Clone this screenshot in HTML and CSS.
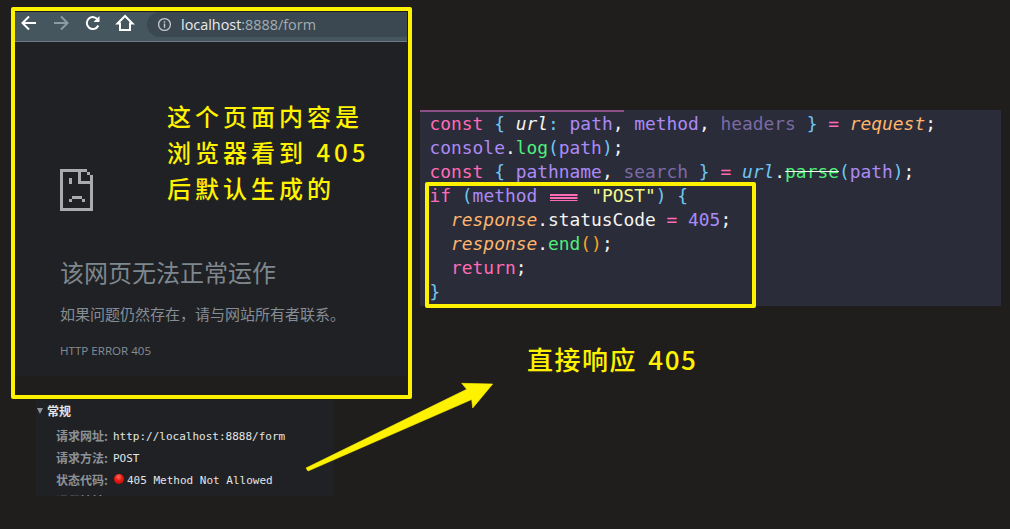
FILE: index.html
```html
<!DOCTYPE html>
<html lang="zh-CN">
<head>
<meta charset="utf-8">
<title>405</title>
<link rel="stylesheet" href="styles.css">
</head>
<body>
<main class="canvas">
  <section class="browser">
    <header class="toolbar">
      <nav class="nav-icons">
        <svg class="icon" viewBox="0 0 20 20"><path d="M17 10H4M10 3.500 3.500 10l6.500 6.500" fill="none" stroke="#fff" stroke-width="2"/></svg>
        <svg class="icon" viewBox="0 0 20 20"><path d="M3 10h13M10 3.500l6.500 6.500-6.500 6.500" fill="none" stroke="#8f9ba3" stroke-width="2"/></svg>
        <svg class="icon" viewBox="0 0 20 20"><path d="M15.300 12.500a6 6 0 1 1-.2-5.300" fill="none" stroke="#fff" stroke-width="2"/><path d="M16.500 3v6h-6z" fill="#fff"/></svg>
        <svg class="icon" viewBox="0 0 20 20"><path d="M10 3 2.500 10.500H5V17h10v-6.500h2.500z" fill="none" stroke="#fff" stroke-width="2"/></svg>
      </nav>
      <div class="omnibox">
        <svg class="info" viewBox="0 0 16 16"><circle cx="8" cy="8" r="6.300" fill="none" stroke="#c4cacd" stroke-width="1.400"/><path d="M8 7v4.500M8 4.500v1.500" stroke="#c4cacd" stroke-width="1.500"/></svg>
        <span class="host">localhost</span><span class="path">:8888/form</span>
      </div>
    </header>
    <div class="error-page">
      <svg class="sad" viewBox="0 0 33 42" shape-rendering="crispEdges"><path fill="#a9abad" fill-rule="evenodd" d="M0 0H27V3H30V6H33V42H0ZM3 3H18V15H30V39H3ZM21 3H27V6H30V12H21Z"/><path fill="#a9abad" d="M9 9h3v6H9zM12 27H22V30H25V33H22V30H12V33H9V30H12Z"/></svg>
      <h1 class="err-title">该网页无法正常运作</h1>
      <p class="err-text">如果问题仍然存在，请与网站所有者联系。</p>
      <p class="err-code">HTTP ERROR 405</p>
    </div>
  </section>

  <section class="devtools">
    <h2 class="dev-head"><span class="caret"></span>常规</h2>
    <dl class="dev-rows">
      <div class="dev-row"><dt>请求网址:</dt><dd>http://localhost:8888/form</dd></div>
      <div class="dev-row"><dt>请求方法:</dt><dd>POST</dd></div>
      <div class="dev-row"><dt>状态代码:</dt><dd><span class="dot"></span>405 Method Not Allowed</dd></div>
      <div class="dev-row dev-row-cut"><dt>远程地址:</dt><dd></dd></div>
    </dl>
  </section>

  <section class="code">
<pre class="code-text"><span class="kw">const</span> <span class="br">{</span> <i class="wh">url</i><span class="br">:</span> <span class="vr">path</span><span class="wh">,</span> <span class="vr">method</span><span class="wh">,</span> <span class="dim">headers</span> <span class="br">}</span> <span class="kw">=</span> <i class="or">request</i><span class="wh">;</span>
<span class="vr">console</span><span class="wh">.</span><span class="gr">log</span><span class="br">(</span><span class="vr">path</span><span class="br">)</span><span class="wh">;</span>
<span class="kw">const</span> <span class="br">{</span> <span class="vr">pathname</span><span class="wh">,</span> <span class="dim">search</span> <span class="br">}</span> <span class="kw">=</span> <i class="br">url</i><span class="wh">.</span><span class="gr strike">parse</span><span class="br">(</span><span class="vr">path</span><span class="br">)</span><span class="wh">;</span>
<span class="kw">if</span> <span class="br">(</span><span class="vr">method</span> <span class="triple">===</span> <span class="st">"POST"</span><span class="br">)</span> <span class="br">{</span>
  <i class="or">response</i><span class="wh">.statusCode</span> <span class="kw">=</span> <span class="vr">405</span><span class="wh">;</span>
  <i class="or">response</i><span class="wh">.</span><span class="gr">end</span><span class="am">()</span><span class="wh">;</span>
  <span class="kw">return</span><span class="wh">;</span>
<span class="br">}</span></pre>
  </section>

  <div class="mark mark-browser"></div>
  <div class="mark mark-code"></div>

  <p class="note note-browser">这个页面内容是<br>浏览器看到 405<br>后默认生成的</p>
  <p class="note note-code">直接响应 405</p>

  <svg class="arrow" viewBox="0 0 1010 529"><path d="M306 468 466.700 389.300 461.700 383.300 492.700 384 472.700 408 471.700 399.500 308 471Z" fill="#fff200" stroke="#fff200" stroke-width=".6" stroke-linejoin="round"/></svg>
</main>
</body>
</html>
```

FILE: styles.css
```css
* { box-sizing: border-box; }
html, body { margin: 0; height: 100%; background: #1f1e1c; overflow: hidden; }
.canvas { position: relative; width: 1010px; height: 529px; font-family: "Noto Sans CJK SC", sans-serif; }

.browser { position: absolute; left: 15px; top: 12px; width: 392px; height: 364px; background: #202124; display: flex; flex-direction: column; }
.toolbar { height: 30px; flex: none; display: flex; align-items: flex-start; background: #46565f; border-bottom: 1px solid #6b7a83; }
.nav-icons { width: 132px; flex: none; display: flex; align-items: center; gap: 12px; padding: 1px 0 0 4px; }
.icon { width: 20px; height: 20px; display: block; }
.omnibox { flex: 1; height: 25px; background: #3b4851; border-radius: 13px 0 0 13px; display: flex; align-items: center; padding-left: 10px; font: 14.400px/23px "Open Sans", "Noto Sans", sans-serif; }
.info { width: 15px; height: 15px; margin-right: 9px; flex: none; }
.host { color: #e8eaed; }
.path { color: #a3adb3; }
.error-page { padding: 127px 0 0 45px; }
.sad { display: block; width: 33px; height: 42px; }
.err-title { margin: 43px 0 0; font: 400 24px/36px "Noto Sans CJK SC", sans-serif; color: #7f878e; }
.err-text { margin: 14px 0 0; font: 15px/20px "Noto Sans CJK SC", sans-serif; color: #858d94; white-space: nowrap; }
.err-code { margin: 19px 0 0; font: 11.600px/16px "Open Sans", "Noto Sans", sans-serif; color: #858d94; }

.devtools { position: absolute; left: 36px; top: 400px; width: 298px; height: 96px; background: #202124; overflow: hidden; }
.dev-head { margin: 0; height: 22px; display: flex; align-items: center; padding-left: 1px; font: 700 12px/22px "Noto Sans CJK SC", sans-serif; color: #e0e2e4; }
.caret { width: 0; height: 0; margin-right: 4px; border: 3.500px solid transparent; border-top: 6px solid #8f9397; border-bottom: 0; }
.dev-rows { margin: 3px 0 0; padding-left: 20px; }
.dev-row { height: 22px; display: flex; align-items: center; }
.dev-row-cut { margin-top: -1px; }
.dev-row dt { width: 57px; flex: none; font: 700 12px/22px "Noto Sans CJK SC", sans-serif; color: #8c9196; }
.dev-row dd { margin: 0; padding-top: 2px; display: flex; align-items: center; font: 11px/22px "DejaVu Sans Mono", monospace; color: #e3e5e7; white-space: pre; }
.dot { width: 10px; height: 10px; margin: -4px 3px 0 1px; border-radius: 50%; background: radial-gradient(circle at 45% 30%, #ff6a5a 0, #e8170f 45%, #a80d08 100%); }

.code { position: absolute; left: 420px; top: 110px; width: 581px; height: 196px; background: #2a2c3a; }
.code::before { content: ""; position: absolute; left: 0; top: 0; width: 204px; height: 2px; background: #8c4f86; }
.code-text { margin: 0; padding: 2px 0 0 9.500px; font: 17.900px/24px "DejaVu Sans Mono", monospace; color: #f8f8f2; }
.code-text i { font-style: italic; }
.kw { color: #ff6bb5; }
.br { color: #6fc6f2; }
.wh { color: #f4f4f0; }
.vr { color: #ac8af5; }
.dim { color: #7a6ba3; }
.or { color: #ffb56b; }
.gr { color: #50ef7b; }
.st { color: #f1fa8c; }
.am { color: #f5a623; }
.strike { text-decoration: line-through; text-decoration-color: #f4f4f0; }
.triple { color: transparent; background: repeating-linear-gradient(to bottom, #ff6bb5 0 1.500px, transparent 1.500px 3px) center 9px / 86% 7px no-repeat; }

.mark { position: absolute; border: 4px solid #fff200; border-radius: 2px; pointer-events: none; }
.mark-browser { left: 11px; top: 7px; width: 401px; height: 392px; }
.mark-code { left: 425px; top: 182px; width: 331px; height: 126px; }

.note { position: absolute; margin: 0; color: #fff200; font: 500 24px/36px "Noto Sans CJK SC", sans-serif; letter-spacing: 4px; white-space: nowrap; }
.note-browser { left: 167px; top: 98px; }
.note-code { left: 527px; top: 341px; font-size: 26px; letter-spacing: 1.500px; word-spacing: 4px; }

.arrow { position: absolute; left: 0; top: 0; width: 1010px; height: 529px; pointer-events: none; }
```
